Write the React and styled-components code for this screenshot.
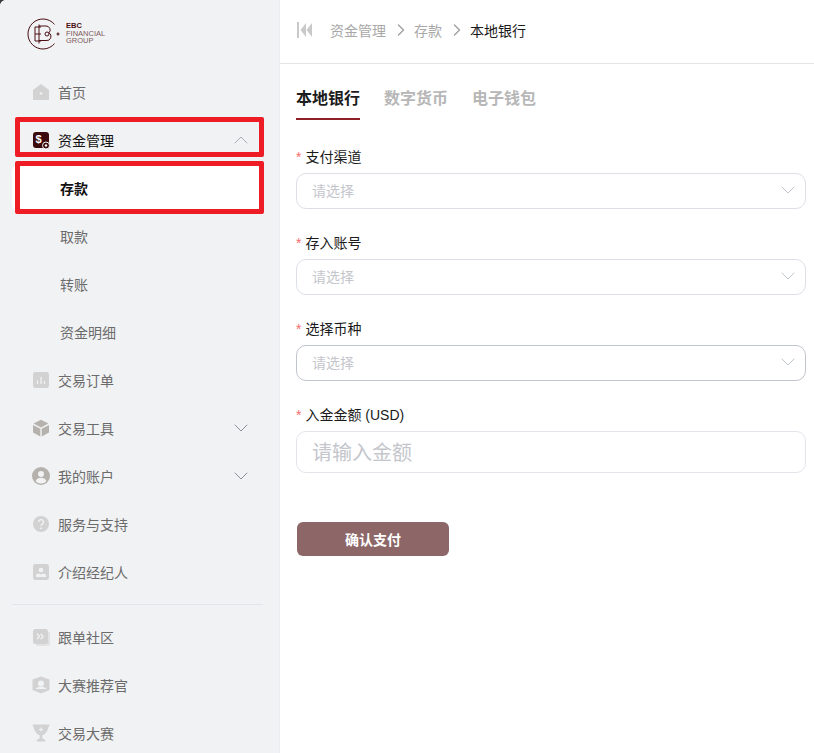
import React from 'react';
import styled, { createGlobalStyle } from 'styled-components';
import { ChevronDown, ChevronUp, ChevronRight } from 'lucide-react';

const GlobalStyle = createGlobalStyle`
  html, body {
    margin: 0;
    padding: 0;
    height: 100%;
    background: #3a3a3a;
    overflow: hidden;
  }
  * {
    box-sizing: border-box;
  }
  body {
    font-family: 'Liberation Sans', 'Noto Sans CJK SC', sans-serif;
  }
`;

const Page = styled.div`
  display: flex;
  width: 814px;
  height: 753px;
  overflow: hidden;
  background: #fff;
  border-top-left-radius: 6px;
`;

const Sidebar = styled.aside`
  width: 280px;
  flex: none;
  height: 753px;
  padding: 0 16px 0 12px;
  background: #f1f2f4;
  border-right: 1px solid #ececf0;
  overflow: hidden;
`;

const LogoRow = styled.div`
  display: flex;
  align-items: center;
  gap: 5px;
  height: 68px;
  padding: 0 0 1px 15px;
`;

const LogoText = styled.div`
  font-size: 7.5px;
  line-height: 7.5px;
  color: #7d5b5b;
  b {
    display: block;
    color: #4a0f12;
  }
`;

const MenuItem = styled.div`
  position: relative;
  display: flex;
  align-items: center;
  height: 48px;
  padding-left: ${p => (p.$sub ? '48px' : '20px')};
  font-size: 14px;
  font-weight: ${p => (p.$current ? 700 : 400)};
  color: ${p => (p.$active || p.$current ? '#111' : '#6b6b6b')};
  background: ${p => (p.$current ? '#fff' : 'transparent')};
  border-radius: ${p => (p.$current ? '8px' : '0')};
`;

const MenuIcon = styled.span`
  display: flex;
  width: 18px;
  height: 18px;
  margin-right: 8px;
  flex: none;
`;

const MenuArrow = styled.span`
  display: flex;
  margin-left: auto;
  margin-right: 10px;
  color: ${p => (p.$open ? '#a9adb5' : '#8d9098')};
`;

// the red marks were painted over the screenshot, so they sit on top of the rows
const Highlight = styled.span`
  position: absolute;
  left: 3px;
  right: -1px;
  top: ${p => p.$top}px;
  bottom: ${p => p.$bottom}px;
  border: 5px solid #ee1c25;
  border-radius: 2px;
  pointer-events: none;
`;

const Divider = styled.div`
  height: 1px;
  margin: 8px 0;
  background: #e2e5ea;
`;

const Main = styled.main`
  flex: 1;
  min-width: 0;
`;

const TopBar = styled.header`
  display: flex;
  align-items: center;
  height: 64px;
  padding: 0 16px 3px 16px;
  border-bottom: 1px solid #e6e6ea;
`;

const Crumbs = styled.nav`
  display: flex;
  align-items: center;
  margin-left: 16px;
  font-size: 14px;
  color: #a8a8a8;
`;

const CrumbSep = styled.span`
  display: flex;
  margin: 0 3px 0 5px;
  color: #a3a3a3;
`;

const CrumbNow = styled.span`
  color: #1a1a1a;
`;

const Content = styled.div`
  padding: 0 8px 0 16px;
`;

const Tabs = styled.div`
  display: flex;
  gap: 24px;
  height: 56px;
  padding-top: 20px;
`;

const Tab = styled.div`
  height: 36px;
  font-size: 16px;
  line-height: 30px;
  font-weight: 700;
  color: ${p => (p.$active ? '#1c1c1c' : '#b7b7b7')};
  border-bottom: 2px solid ${p => (p.$active ? '#8e1f25' : 'transparent')};
`;

const FormItem = styled.div`
  margin-top: ${p => (p.$first ? '26px' : '23px')};
`;

const Label = styled.div`
  height: 22px;
  margin-bottom: 5px;
  font-size: 14px;
  line-height: 22px;
  color: #1a1a1a;
  &::before {
    content: '*';
    margin-right: 4px;
    color: #f56c6c;
  }
`;

const Select = styled.div`
  display: flex;
  align-items: center;
  justify-content: space-between;
  height: 36px;
  padding: 0 5px 2px 15px;
  border: 1px solid ${p => (p.$hover ? '#c0c4cc' : '#dcdfe6')};
  border-radius: 10px;
  font-size: 14px;
  color: #c4c6cc;
`;

const SelectArrow = styled.span`
  display: flex;
  color: #c0c4cc;
`;

const Input = styled.div`
  display: flex;
  align-items: center;
  height: 42px;
  padding: 0 15px 2px;
  border: 1px solid #e2e4ea;
  border-radius: 10px;
  font-size: 20px;
  color: #c4c6cc;
`;

const SubmitButton = styled.button`
  display: block;
  width: 152px;
  height: 34px;
  margin: 49px 0 0 1px;
  padding: 0;
  border: 0;
  border-radius: 6px;
  background: #8d6767;
  color: #fff;
  font-family: inherit;
  font-size: 14px;
  font-weight: 700;
`;

const Logo = () => (
  <svg width="34" height="34" viewBox="0 0 34 34" fill="none" stroke="#4a0f12" strokeWidth="1">
    <path d="M27.5 7.400A15 15 0 1 0 27.500 26.600" />
    <path d="M14 10H8v14h6M8 17h6" />
    <path d="M12 7.500v19" />
    <path d="M12 9h7a4 4 0 0 1 3 6.800a4.200 4.200 0 0 1-3 7.700h-7" />
    <circle cx="20" cy="17" r="2" />
    <path d="M31 15.500v3M29.500 17h3" strokeWidth="1.200" />
  </svg>
);

const icons = {
  home: (
    <>
      <path d="M9 1 1 7v9a1 1 0 0 0 1 1h14a1 1 0 0 0 1-1V7z" fill="#d2d2d2" />
      <path d="M9 9v3M7.500 10.500h3" stroke="#f1f2f4" strokeWidth="1" />
    </>
  ),
  money: (
    <>
      <rect x="1" y="1" width="16" height="16" rx="3" fill="#3d0a0c" />
      <text x="3.500" y="12" fontSize="11" fontWeight="700" fill="#fff" fontFamily="Liberation Sans">$</text>
      <circle cx="14" cy="14.500" r="3.500" fill="#3d0a0c" stroke="#f1f2f4" />
      <circle cx="14" cy="14.500" r="1.200" fill="#fff" />
    </>
  ),
  chart: (
    <>
      <rect x="1" y="1" width="16" height="16" rx="2.500" fill="#d2d2d2" />
      <path d="M5.500 9.500v3.500M9 6v7M12.500 10v3" stroke="#f1f2f4" strokeWidth="1.300" />
    </>
  ),
  box: (
    <>
      <path d="M9 .8 16.400 4.600 9 8.400 1.600 4.600z" fill="#b5b1ad" />
      <path d="M1 6v7.600l7.300 3.800V9.700z" fill="#b5b1ad" />
      <path d="M17 6v7.600l-7.300 3.800V9.700z" fill="#b5b1ad" />
    </>
  ),
  user: (
    <>
      <circle cx="9" cy="9" r="9" fill="#b5b1ad" />
      <circle cx="9" cy="7" r="3" fill="#f1f2f4" />
      <path d="M3.600 14.200c1-2.400 3-3.400 5.400-3.400s4.400 1 5.400 3.400A7 7 0 0 1 9 16.400a7 7 0 0 1-5.400-2.200z" fill="#f1f2f4" />
    </>
  ),
  help: (
    <>
      <circle cx="9" cy="9" r="8" fill="#d2d2d2" />
      <path d="M6.600 7a2.400 2.400 0 1 1 3.600 2.100c-.8.500-1.200 1-1.200 2" stroke="#f1f2f4" strokeWidth="1.500" fill="none" />
      <circle cx="9" cy="13.300" r="1" fill="#f1f2f4" />
    </>
  ),
  agent: (
    <>
      <rect x="1" y="1" width="16" height="16" rx="2.500" fill="#d2d2d2" />
      <circle cx="9" cy="7" r="2.300" fill="#f1f2f4" />
      <path d="M4 14v-1.500c0-1 1-1.700 2-1.700h1.500c.5.800 2.500.800 3 0H12c1 0 2 .700 2 1.700V14z" fill="#f1f2f4" />
    </>
  ),
  copy: (
    <>
      <rect x="3.500" y="3.500" width="14.500" height="14.500" rx="2.500" fill="#e2e2e2" />
      <rect x="1" y="1" width="15" height="15" rx="2.500" fill="#d2d2d2" />
      <path d="M5 5.700 7.500 8.500 5 11.300M8.700 5.700l2.500 2.800-2.500 2.800" stroke="#f1f2f4" strokeWidth="1.300" fill="none" />
    </>
  ),
  badge: (
    <>
      <path d="M9 .5 17.500 3.500v10.500L9 17.500.5 14V3.500z" fill="#d2d2d2" />
      <circle cx="9" cy="7.500" r="3" fill="#f1f2f4" />
      <path d="M3.500 13c1-1.700 3-2.200 5.500-2.200s4.500.500 5.500 2.200z" fill="#f1f2f4" />
    </>
  ),
  cup: (
    <>
      <path d="M.5 .5h17L16 4.500c-.8 3.500-3.500 6-5.700 6.800V14H7.700v-2.700C5.500 10.500 2.800 8 2 4.500z" fill="#d2d2d2" />
      <path d="M9 3.500v4M7 5.500h4" stroke="#f1f2f4" strokeWidth="1.200" />
      <path d="M4.500 17.500c.5-2.200 2.200-3.500 4.500-3.500s4 1.300 4.500 3.500z" fill="#d2d2d2" />
    </>
  ),
};

const Icon = ({ name }) => (
  <MenuIcon>
    <svg width="18" height="18" viewBox="0 0 18 18">{icons[name]}</svg>
  </MenuIcon>
);

const CollapseIcon = () => (
  <svg width="18" height="16" viewBox="0 0 18 16" fill="#c9c9c9">
    <rect x="1" y="0" width="2" height="16" />
    <path d="M10 1v14L4.500 8zM16 1v14L10.500 8z" />
  </svg>
);

const Row = ({ icon, title, arrow }) => (
  <MenuItem>
    <Icon name={icon} />
    {title}
    {arrow === 'down' && <MenuArrow><ChevronDown size={24} strokeWidth={1} /></MenuArrow>}
  </MenuItem>
);

const Field = ({ label, first, hover }) => (
  <FormItem $first={first}>
    <Label>{label}</Label>
    <Select $hover={hover}>
      请选择
      <SelectArrow><ChevronDown size={24} strokeWidth={1} /></SelectArrow>
    </Select>
  </FormItem>
);

function App() {
  return (
    <Page>
      <GlobalStyle />
      <Sidebar>
        <LogoRow>
          <Logo />
          <LogoText>
            <b>EBC</b>
            FINANCIAL
            <br />
            GROUP
          </LogoText>
        </LogoRow>
        <Row icon="home" title="首页" />
        <MenuItem $active>
          <Icon name="money" />
          资金管理
          <MenuArrow $open><ChevronUp size={24} strokeWidth={1} /></MenuArrow>
          <Highlight $top={1} $bottom={7} />
        </MenuItem>
        <MenuItem $sub $current>
          存款
          <Highlight $top={-3} $bottom={-2} />
        </MenuItem>
        <MenuItem $sub>取款</MenuItem>
        <MenuItem $sub>转账</MenuItem>
        <MenuItem $sub>资金明细</MenuItem>
        <Row icon="chart" title="交易订单" />
        <Row icon="box" title="交易工具" arrow="down" />
        <Row icon="user" title="我的账户" arrow="down" />
        <Row icon="help" title="服务与支持" />
        <Row icon="agent" title="介绍经纪人" />
        <Divider />
        <Row icon="copy" title="跟单社区" />
        <Row icon="badge" title="大赛推荐官" />
        <Row icon="cup" title="交易大赛" />
      </Sidebar>
      <Main>
        <TopBar>
          <CollapseIcon />
          <Crumbs>
            资金管理
            <CrumbSep><ChevronRight size={20} strokeWidth={1.8} /></CrumbSep>
            存款
            <CrumbSep><ChevronRight size={20} strokeWidth={1.8} /></CrumbSep>
            <CrumbNow>本地银行</CrumbNow>
          </Crumbs>
        </TopBar>
        <Content>
          <Tabs>
            <Tab $active>本地银行</Tab>
            <Tab>数字货币</Tab>
            <Tab>电子钱包</Tab>
          </Tabs>
          <Field label="支付渠道" first />
          <Field label="存入账号" />
          <Field label="选择币种" hover />
          <FormItem>
            <Label>入金金额 (USD)</Label>
            <Input>请输入金额</Input>
          </FormItem>
          <SubmitButton>确认支付</SubmitButton>
        </Content>
      </Main>
    </Page>
  );
}

export default App;
